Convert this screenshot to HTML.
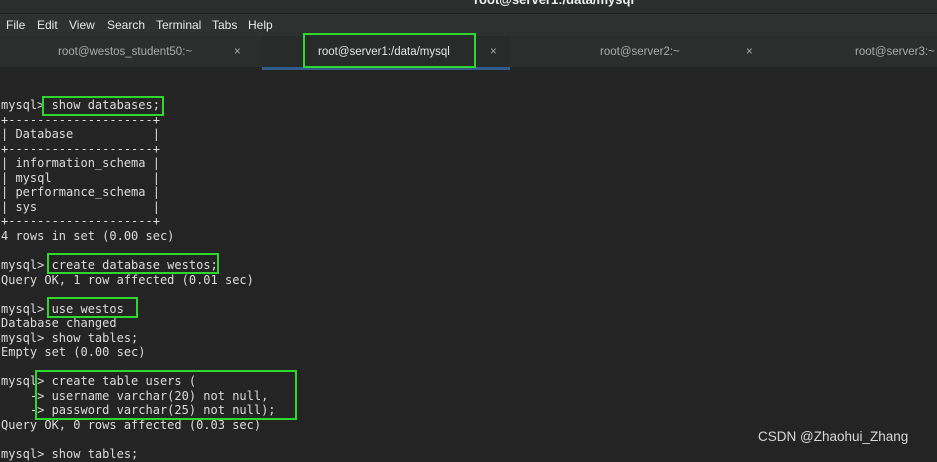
<!DOCTYPE html>
<html><head><style>
*{margin:0;padding:0;box-sizing:border-box}
body{width:937px;height:453px;overflow:hidden;background:#242424;position:relative;font-family:"Liberation Sans",sans-serif}
.title{position:absolute;left:0;top:0;width:937px;height:14px;background:#2a2e2d;border-bottom:1px solid #1f2221}
.title span{position:absolute;left:474px;top:-8px;color:#eee;font-size:13px;font-weight:bold}
.menu{position:absolute;left:0;top:14px;width:937px;height:22px;background:#2d3231;color:#e8e8e8;font-size:12px}
.menu span{position:absolute;top:4px}
.tabs{position:absolute;left:0;top:36px;width:937px;height:31px;background:#2a2f2e;font-size:11.5px;color:#a9aeac}
.tabs span{position:absolute;top:10px}
.act{position:absolute;left:262px;top:0;width:248px;height:34px;background:#272b2a;border-bottom:3px solid #2f5c8a}
.term{position:absolute;left:1px;top:98px;font-family:"DejaVu Sans Mono","Liberation Mono",monospace;font-size:12px;line-height:14.55px;color:#dcdcdc;white-space:pre}
.box{position:absolute;border:2px solid #2fd62f}
.wm{position:absolute;left:758px;top:429px;color:#d8d8d8;font-size:13.5px}
</style></head><body>
<div class="title"><span>root@server1:/data/mysql</span></div>
<div class="menu"><span style="left:6px">File</span><span style="left:37px">Edit</span><span style="left:69px">View</span><span style="left:107px">Search</span><span style="left:156px">Terminal</span><span style="left:212px">Tabs</span><span style="left:248px">Help</span></div>
<div class="tabs">
<span style="left:58px">root@westos_student50:~</span><span style="left:234px">×</span>
<div class="act"></div>
<span style="left:318px;color:#e6e6e6">root@server1:/data/mysql</span><span style="left:490px">×</span>
<span style="left:600px">root@server2:~</span><span style="left:746px">×</span>
<span style="left:855px">root@server3:~</span>
</div>
<div class="term">mysql> show databases;
+--------------------+
| Database           |
+--------------------+
| information_schema |
| mysql              |
| performance_schema |
| sys                |
+--------------------+
4 rows in set (0.00 sec)

mysql> create database westos;
Query OK, 1 row affected (0.01 sec)

mysql> use westos
Database changed
mysql> show tables;
Empty set (0.00 sec)

mysql> create table users (
    -> username varchar(20) not null,
    -> password varchar(25) not null);
Query OK, 0 rows affected (0.03 sec)

mysql> show tables;</div>
<div class="box" style="left:42px;top:96px;width:122px;height:20px"></div>
<div class="box" style="left:303px;top:33px;width:173px;height:35px"></div>
<div class="box" style="left:47px;top:253px;width:172px;height:21px"></div>
<div class="box" style="left:47px;top:297px;width:91px;height:21px"></div>
<div class="box" style="left:35px;top:370px;width:262px;height:50px"></div>
<div class="wm">CSDN @Zhaohui_Zhang</div>
</body></html>
